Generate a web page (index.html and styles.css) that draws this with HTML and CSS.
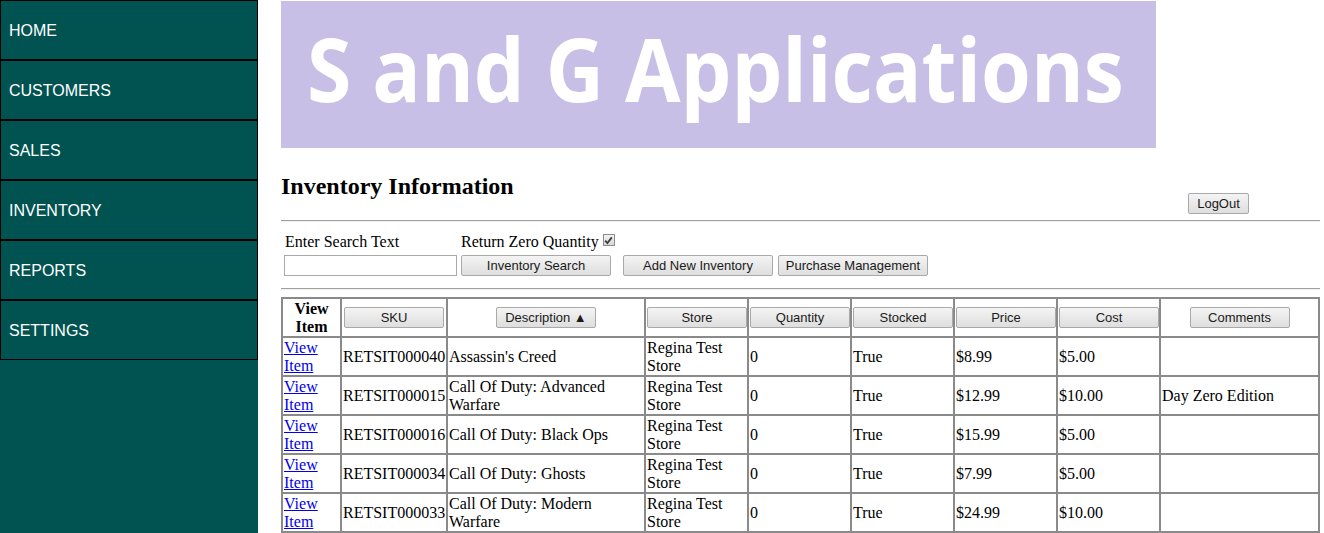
FILE: index.html
```html
<!DOCTYPE html>
<html>
<head>
<meta charset="utf-8">
<title>Inventory Information</title>
<link rel="stylesheet" href="styles.css">
</head>
<body>
<div class="page">
  <nav class="sidebar">
    <a class="nav-item" href="#">HOME</a>
    <a class="nav-item" href="#">CUSTOMERS</a>
    <a class="nav-item" href="#">SALES</a>
    <a class="nav-item" href="#">INVENTORY</a>
    <a class="nav-item" href="#">REPORTS</a>
    <a class="nav-item" href="#">SETTINGS</a>
  </nav>
  <main class="main">
    <div class="banner"><span class="banner-text">S and G Applications</span></div>
    <div class="title-row">
      <h2 class="title">Inventory Information</h2>
      <button class="btn btn-logout">LogOut</button>
    </div>
    <hr class="rule">
    <div class="search">
      <div class="search-labels">
        <span class="label-search">Enter Search Text</span>
        <span class="label-zero">Return Zero Quantity <span class="chk"><svg width="9" height="9" viewBox="0 0 9 9"><path d="M1.2 4.6 L3.4 7 L7.8 1.4" fill="none" stroke="#3c3c3c" stroke-width="1.8"/></svg></span></span>
      </div>
      <div class="search-controls">
        <input class="search-input" type="text">
        <button class="btn btn-wide">Inventory Search</button>
        <button class="btn btn-wide btn-add">Add New Inventory</button>
        <button class="btn btn-wide btn-purchase">Purchase Management</button>
      </div>
    </div>
    <hr class="rule rule-2">
    <table class="grid">
      <thead>
        <tr>
          <th class="c1 th-text">View<br>Item</th>
          <th class="c2"><button class="btn btn-head">SKU</button></th>
          <th class="c3"><button class="btn btn-head">Description ▲</button></th>
          <th class="c4"><button class="btn btn-head">Store</button></th>
          <th class="c5"><button class="btn btn-head">Quantity</button></th>
          <th class="c6"><button class="btn btn-head">Stocked</button></th>
          <th class="c7"><button class="btn btn-head">Price</button></th>
          <th class="c8"><button class="btn btn-head">Cost</button></th>
          <th class="c9"><button class="btn btn-head">Comments</button></th>
        </tr>
      </thead>
      <tbody>
        <tr>
          <td><a href="#">View<br>Item</a></td>
          <td>RETSIT000040</td>
          <td>Assassin's Creed</td>
          <td>Regina Test Store</td>
          <td>0</td>
          <td>True</td>
          <td>$8.99</td>
          <td>$5.00</td>
          <td></td>
        </tr>
        <tr>
          <td><a href="#">View<br>Item</a></td>
          <td>RETSIT000015</td>
          <td>Call Of Duty: Advanced Warfare</td>
          <td>Regina Test Store</td>
          <td>0</td>
          <td>True</td>
          <td>$12.99</td>
          <td>$10.00</td>
          <td>Day Zero Edition</td>
        </tr>
        <tr>
          <td><a href="#">View<br>Item</a></td>
          <td>RETSIT000016</td>
          <td>Call Of Duty: Black Ops</td>
          <td>Regina Test Store</td>
          <td>0</td>
          <td>True</td>
          <td>$15.99</td>
          <td>$5.00</td>
          <td></td>
        </tr>
        <tr>
          <td><a href="#">View<br>Item</a></td>
          <td>RETSIT000034</td>
          <td>Call Of Duty: Ghosts</td>
          <td>Regina Test Store</td>
          <td>0</td>
          <td>True</td>
          <td>$7.99</td>
          <td>$5.00</td>
          <td></td>
        </tr>
        <tr>
          <td><a href="#">View<br>Item</a></td>
          <td>RETSIT000033</td>
          <td>Call Of Duty: Modern Warfare</td>
          <td>Regina Test Store</td>
          <td>0</td>
          <td>True</td>
          <td>$24.99</td>
          <td>$10.00</td>
          <td></td>
        </tr>
      </tbody>
    </table>
  </main>
</div>
</body>
</html>
```
FILE: styles.css
```css
html, body {
  margin: 0;
  padding: 0;
  background: #ffffff;
  font-family: "Liberation Serif", "Times New Roman", serif;
  font-size: 16px;
  color: #000;
}

.page {
  display: flex;
  align-items: stretch;
  min-height: 533px;
}

.sidebar {
  width: 258px;
  flex: 0 0 258px;
  background: #015351;
  display: flex;
  flex-direction: column;
}

.nav-item {
  box-sizing: border-box;
  height: 60px;
  border: 1px solid #000;
  display: flex;
  align-items: center;
  padding-left: 8px;
  padding-top: 1px;
  color: #ffffff;
  text-decoration: none;
  font-family: "Liberation Sans", Arial, sans-serif;
  font-size: 16px;
}

.main {
  flex: 1;
  padding-left: 23px;
  padding-right: 4px;
  min-width: 0;
}

.banner {
  margin-top: 1px;
  width: 875px;
  height: 147px;
  background: #c7bfe5;
  display: flex;
  align-items: center;
  overflow: hidden;
}

.banner-text {
  font-family: "Open Sans", "Noto Sans", sans-serif;
  font-weight: 700;
  font-size: 88px;
  color: #ffffff;
  white-space: nowrap;
  margin-left: 26px;
  line-height: 1;
  transform: scaleX(0.915);
  transform-origin: left center;
  position: relative;
  top: -7px;
}

.title-row {
  display: flex;
  align-items: flex-start;
  margin-top: 24px;
}

.title {
  margin: 0;
  font-size: 24px;
  line-height: 28px;
  font-weight: 700;
  flex: 1;
}

.btn {
  font-family: "Liberation Sans", Arial, sans-serif;
  font-size: 13px;
  color: #1a1a1a;
  background: linear-gradient(#f4f4f4, #dedede);
  border: 1px solid #a9a9a9;
  border-radius: 2px;
  padding: 0;
  box-sizing: border-box;
  cursor: pointer;
}

.btn-logout {
  width: 61px;
  height: 21px;
  margin-top: 21px;
  margin-right: 71px;
}

.rule {
  margin: 6px 0 0 0;
  height: 0;
  border: 0;
  border-top: 1px solid #a0a0a0;
  border-bottom: 1px solid #f0f0f0;
}

.search {
  margin-top: 10px;
  padding-left: 3px;
}

.search-labels {
  display: flex;
  height: 20px;
  align-items: center;
  font-size: 16px;
}

.label-search {
  width: 176px;
  padding-left: 1px;
}

.label-zero {
  display: inline-flex;
  align-items: center;
}

.chk {
  display: inline-flex;
  align-items: center;
  justify-content: center;
  box-sizing: border-box;
  width: 12px;
  height: 12px;
  margin-left: 4px;
  border: 1px solid #8c8c8c;
  background: linear-gradient(#f2f2f2, #d8d8d8);
  position: relative;
  top: -2px;
}

.search-controls {
  display: flex;
  margin-top: 3px;
  height: 21px;
}

.search-input {
  box-sizing: border-box;
  width: 173px;
  height: 21px;
  margin: 0 4px 0 0;
  border: 1px solid #a9a9a9;
  padding: 0 2px;
}

.btn-wide {
  width: 150px;
  height: 21px;
}

.btn-add {
  margin-left: 12px;
}

.btn-purchase {
  margin-left: 5px;
}

.rule-2 {
  margin-top: 12px;
}

.grid {
  margin-top: 7px;
  width: 1039px;
  table-layout: fixed;
  border-collapse: separate;
  border-spacing: 0;
  border: 1px solid #8a8a8a;
  font-size: 16px;
  line-height: 18px;
}

.grid th,
.grid td {
  box-sizing: border-box;
  height: 39px;
  border: 1px solid #8a8a8a;
  padding: 0 1px;
  vertical-align: middle;
  text-align: left;
  font-weight: normal;
}

.grid th {
  text-align: center;
}

.grid th.th-text {
  font-weight: 700;
}

.grid a {
  color: #0000ee;
  text-decoration: underline;
}

.btn-head {
  width: 100px;
  height: 21px;
  vertical-align: middle;
}

.c1 { width: 59px; }
.c2 { width: 106px; }
.c3 { width: 198px; }
.c4 { width: 103px; }
.c5 { width: 103px; }
.c6 { width: 103px; }
.c7 { width: 103px; }
.c8 { width: 103px; }
.c9 { width: 159px; }
```
